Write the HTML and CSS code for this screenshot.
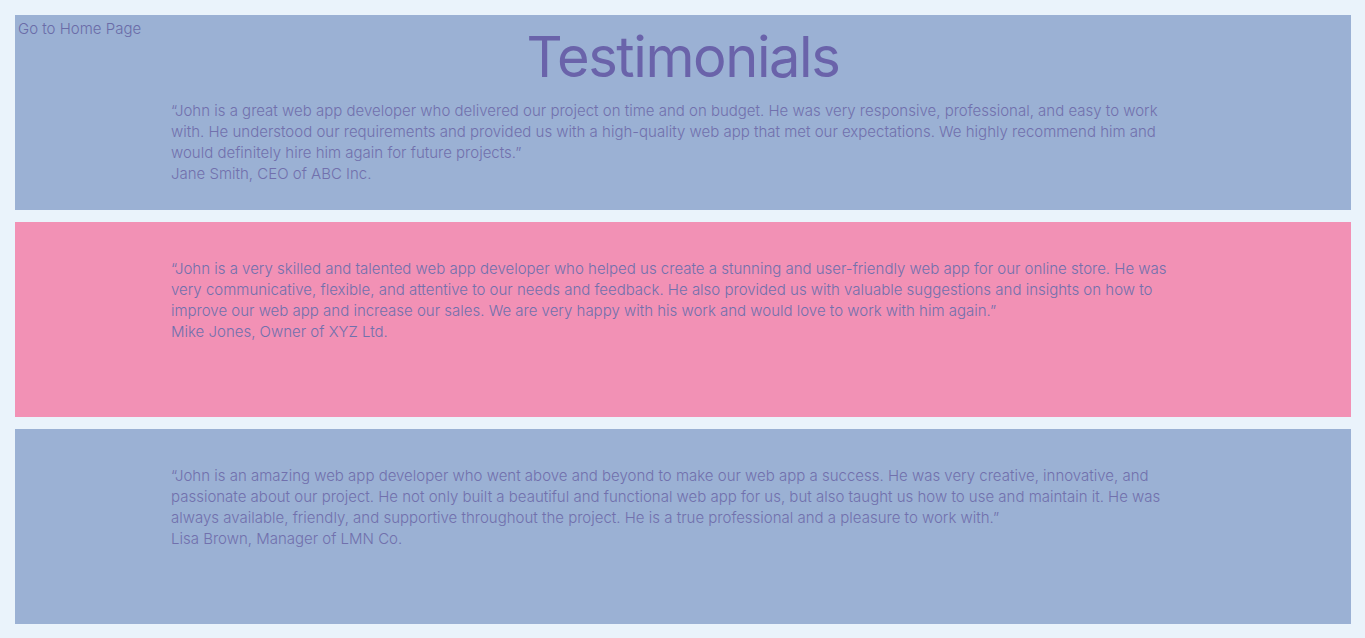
FILE: index.html
```html
<!DOCTYPE html>
<html lang="en">
<head>
<meta charset="utf-8">
<title>Testimonials</title>
<link rel="stylesheet" href="styles.css">
</head>
<body>
<a class="home-link" href="#">Go to Home Page</a>
<main class="page">
  <section class="panel panel-blue panel-first">
    <h1 class="title">Testimonials</h1>
    <div class="quote">
      <p>“John is a great web app developer who delivered our project on time and on budget. He was very responsive, professional, and easy to work with. He understood our requirements and provided us with a high-quality web app that met our expectations. We highly recommend him and would definitely hire him again for future projects.”</p>
      <p>Jane Smith, CEO of ABC Inc.</p>
    </div>
  </section>
  <section class="panel panel-pink">
    <div class="quote">
      <p>“John is a very skilled and talented web app developer who helped us create a stunning and user-friendly web app for our online store. He was very communicative, flexible, and attentive to our needs and feedback. He also provided us with valuable suggestions and insights on how to improve our web app and increase our sales. We are very happy with his work and would love to work with him again.”</p>
      <p>Mike Jones, Owner of XYZ Ltd.</p>
    </div>
  </section>
  <section class="panel panel-blue">
    <div class="quote">
      <p>“John is an amazing web app developer who went above and beyond to make our web app a success. He was very creative, innovative, and passionate about our project. He not only built a beautiful and functional web app for us, but also taught us how to use and maintain it. He was always available, friendly, and supportive throughout the project. He is a true professional and a pleasure to work with.”</p>
      <p>Lisa Brown, Manager of LMN Co.</p>
    </div>
  </section>
</main>
</body>
</html>
```
FILE: styles.css
```css
html, body {
  margin: 0;
  padding: 0;
}
body {
  background: #eaf3fb;
  font-family: Inter, "Noto Sans", sans-serif;
  color: #6a63aa;
  height: 638px;
  overflow: hidden;
}
.home-link {
  position: absolute;
  left: 18px;
  top: 20px;
  font-size: 15px;
  line-height: 18px;
  font-weight: 300;
  color: #6a6ca8;
  text-decoration: none;
}
.page {
  display: flex;
  flex-direction: column;
  gap: 12px;
  padding: 15px 14px 14px 15px;
}
.panel {
  box-sizing: border-box;
  height: 195px;
  padding-top: 36px;
}
.panel-first {
  padding-top: 8px;
}
.panel-blue {
  background: #9bb1d4;
}
.panel-pink {
  background: #f291b5;
}
.title {
  margin: 0 0 9px;
  text-align: center;
  font-size: 56px;
  line-height: 68px;
  font-weight: 400;
  letter-spacing: -1.4px;
  color: #6a63aa;
}
.quote {
  width: 1024px;
  margin: 0 auto;
  font-size: 15px;
  line-height: 21px;
  font-weight: 300;
  color: #7170ad;
}
.quote p {
  margin: 0;
}
```
